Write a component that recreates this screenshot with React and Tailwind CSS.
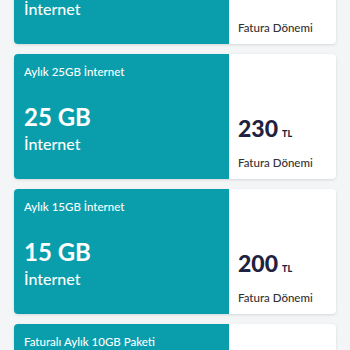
import React from "react";

const packages = [
  { title: "Aylık 30GB İnternet", gb: "30 GB", price: null },
  { title: "Aylık 25GB İnternet", gb: "25 GB", price: "230" },
  { title: "Aylık 15GB İnternet", gb: "15 GB", price: "200" },
  { title: "Faturalı Aylık 10GB Paketi", gb: "10 GB", price: "170" },
];

function PackageCard({ pkg }) {
  return (
    <div className="flex h-[125px] shrink-0 overflow-hidden rounded-[4px] bg-white shadow-[0_1px_3px_rgba(0,0,0,0.12)]">
      <div className="flex w-[215px] flex-col bg-[#0a9dab] px-[10px] text-white">
        <div className="mt-[10px] text-[11.5px] font-medium leading-[16px]">{pkg.title}</div>
        <div className="mt-[23px] text-[24px] font-bold leading-[28px]">{pkg.gb}</div>
        <div className="mt-[2px] text-[16px] font-medium leading-[22px]">İnternet</div>
      </div>
      <div className="flex flex-1 flex-col pl-[9px]">
        <div className="mt-[61px] flex h-[26px] items-baseline text-[#1f2240]">
          {pkg.price && (
            <>
              <span className="text-[23px] font-black leading-[26px]">{pkg.price}</span>
              <span className="ml-[4px] text-[9px] font-black">TL</span>
            </>
          )}
        </div>
        <div className="mt-[14px] text-[11.5px] font-medium leading-[16px] text-[#333]">Fatura Dönemi</div>
      </div>
    </div>
  );
}

export default function App() {
  return (
    <div
      className="h-[350px] w-[350px] overflow-hidden bg-[#f4f5f7]"
      style={{ fontFamily: "Lato, 'Noto Sans', sans-serif" }}
    >
      <div className="mt-[-81px] flex flex-col gap-[10px] pl-[14px] pr-[14px]">
        {packages.map((p) => (
          <PackageCard key={p.title} pkg={p} />
        ))}
      </div>
    </div>
  );
}
